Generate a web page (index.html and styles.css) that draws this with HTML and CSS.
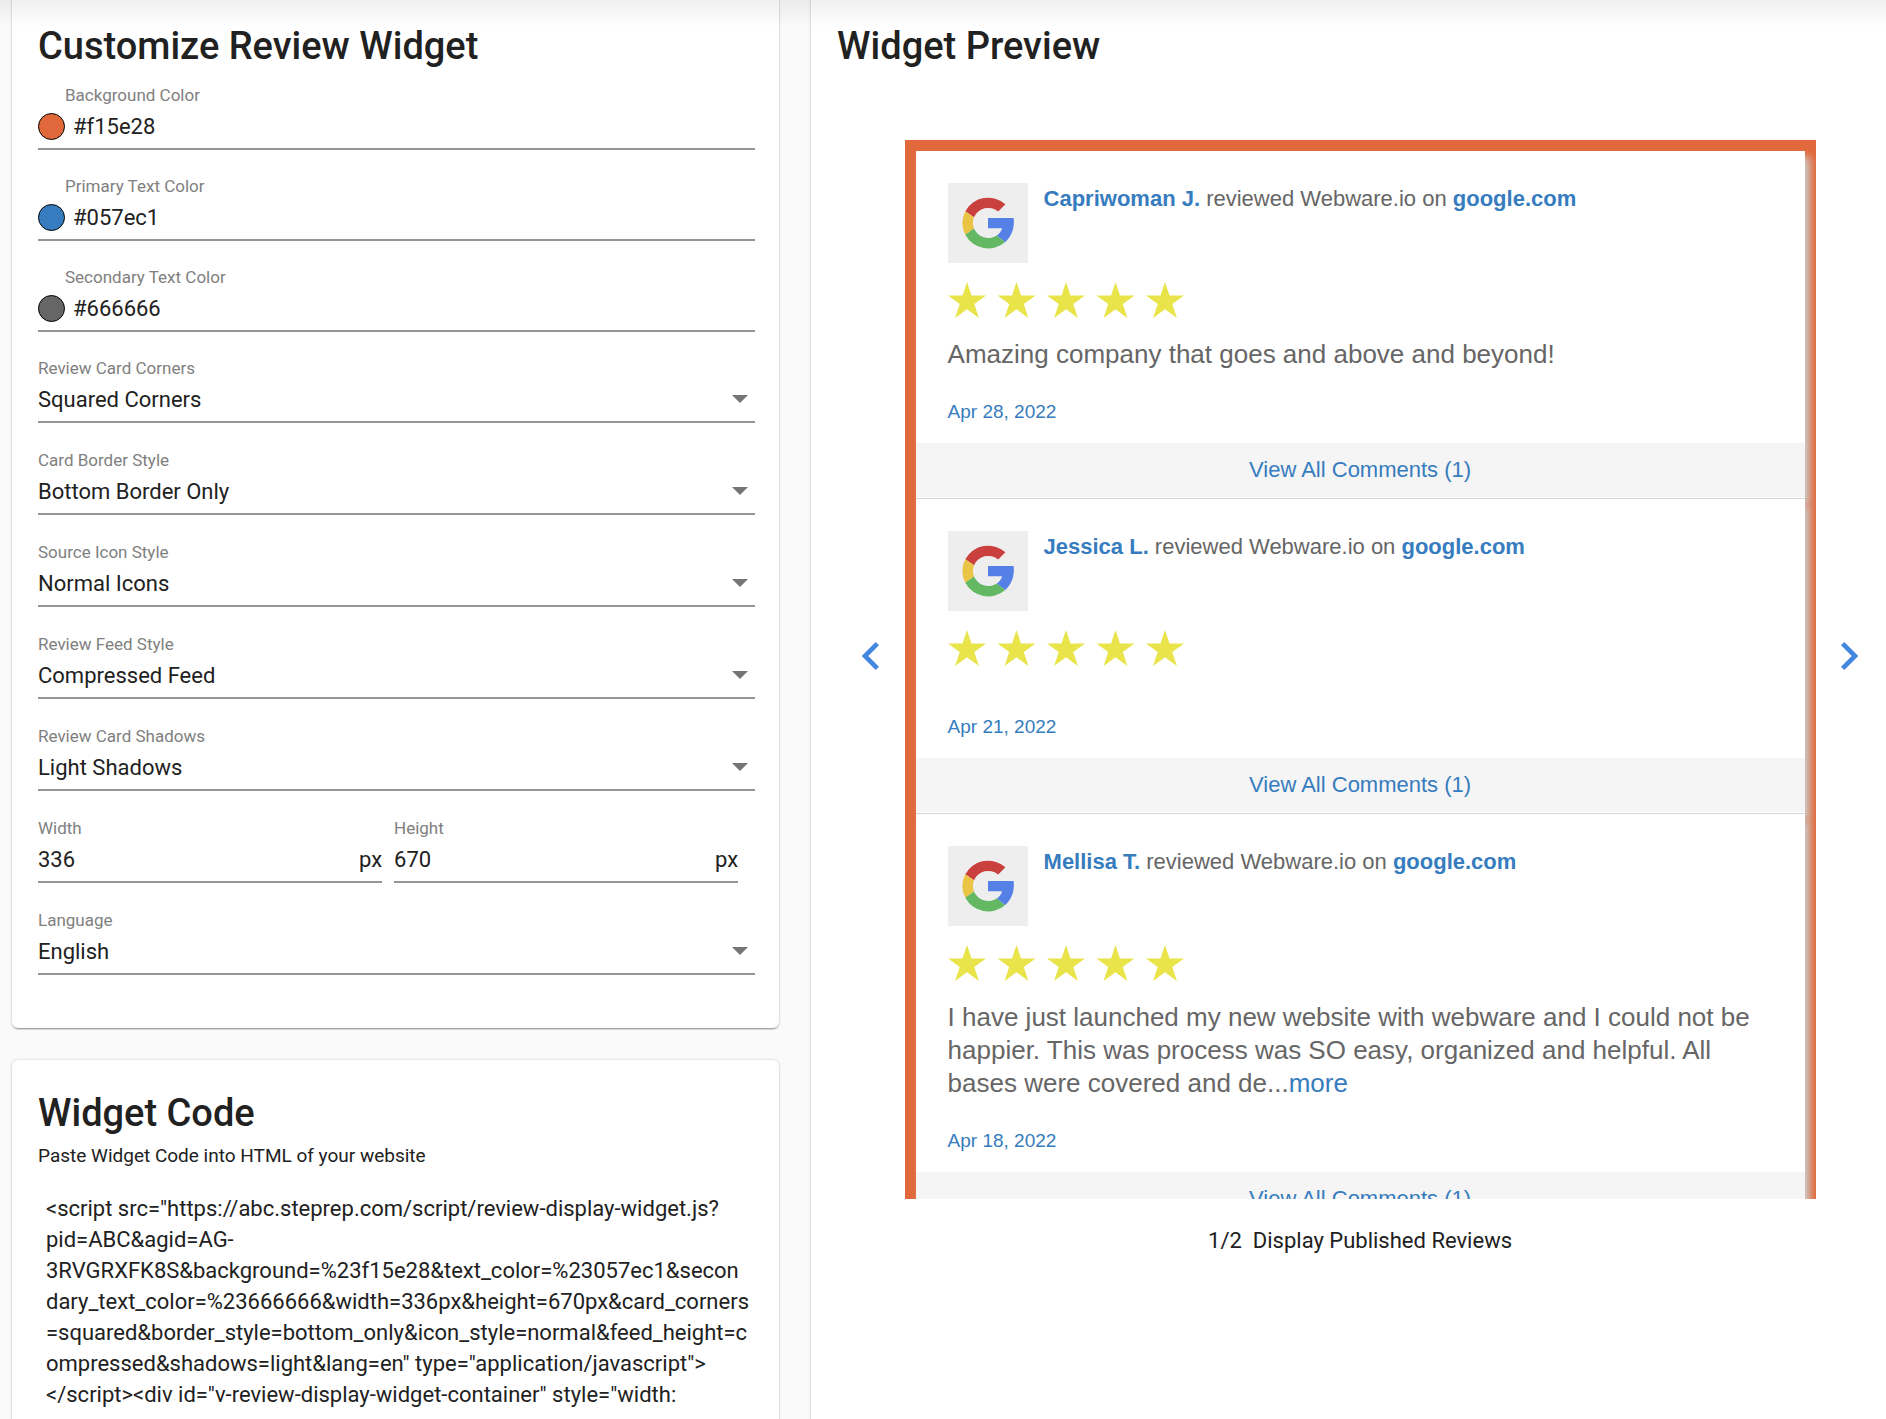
FILE: index.html
```
<!DOCTYPE html>
<html lang="en">

<head>
    <meta charset="UTF-8">
    <meta name="viewport" content="width=device-width, initial-scale=1.0">
    <title>Review Display Widget</title>
    <link rel="stylesheet" href="styles.css">
</head>

<body>
    <!-- shared shapes -->
    <svg class="defs" aria-hidden="true">
        <symbol id="stars" viewBox="0 0 236 36">
            <g fill="#e8e449">
                <path id="star" d="M19 0l4.5 13.5H38L26.300 22 30.900 36 19 27.300 7.100 36 11.700 22 0 13.500h14.500z"/>
                <use href="#star" x="49.500"/>
                <use href="#star" x="99"/>
                <use href="#star" x="148.500"/>
                <use href="#star" x="198"/>
            </g>
        </symbol>
        <symbol id="google" viewBox="0 0 52 52">
            <path fill="#c9403c" d="M3.300 14.200A26 26 0 0 1 43.400 7.300L36.200 14.500A15.500 15.500 0 0 0 12 20.300z"/>
            <path fill="#eac445" d="M3.300 14.200A26 26 0 0 0 3.300 37.800L12 31.500A15.500 15.500 0 0 1 12 20.300z"/>
            <path fill="#65b863" d="M3.300 37.800A26 26 0 0 0 43.300 45L34.800 38.500A15.500 15.500 0 0 1 12 31.500z"/>
            <path fill="#5580e6" d="M26 21H51.600C52.800 30.500 49.800 39 43.300 45L34.800 38.500C37.600 36.600 39.300 34.300 40 31.200H26z"/>
        </symbol>
    </svg>

    <main class="page">
        <div class="column">
            <section class="card">
                <h1>Customize Review Widget</h1>
                <form>
                    <div class="field color-field">
                        <label for="background">Background Color</label>
                        <div class="control">
                            <span class="swatch swatch-background"></span>
                            <input type="text" id="background" value="#f15e28">
                        </div>
                    </div>
                    <div class="field color-field">
                        <label for="primaryText">Primary Text Color</label>
                        <div class="control">
                            <span class="swatch swatch-primary"></span>
                            <input type="text" id="primaryText" value="#057ec1">
                        </div>
                    </div>
                    <div class="field color-field">
                        <label for="secondaryText">Secondary Text Color</label>
                        <div class="control">
                            <span class="swatch swatch-secondary"></span>
                            <input type="text" id="secondaryText" value="#666666">
                        </div>
                    </div>
                    <div class="field select-field">
                        <label for="corners">Review Card Corners</label>
                        <div class="control">
                            <select id="corners"><option>Squared Corners</option></select>
                        </div>
                    </div>
                    <div class="field select-field">
                        <label for="borderStyle">Card Border Style</label>
                        <div class="control">
                            <select id="borderStyle"><option>Bottom Border Only</option></select>
                        </div>
                    </div>
                    <div class="field select-field">
                        <label for="iconStyle">Source Icon Style</label>
                        <div class="control">
                            <select id="iconStyle"><option>Normal Icons</option></select>
                        </div>
                    </div>
                    <div class="field select-field">
                        <label for="feedStyle">Review Feed Style</label>
                        <div class="control">
                            <select id="feedStyle"><option>Compressed Feed</option></select>
                        </div>
                    </div>
                    <div class="field select-field">
                        <label for="shadows">Review Card Shadows</label>
                        <div class="control">
                            <select id="shadows"><option>Light Shadows</option></select>
                        </div>
                    </div>
                    <div class="size-row">
                        <div class="field">
                            <label for="width">Width</label>
                            <div class="control">
                                <input type="text" id="width" value="336">
                                <span>px</span>
                            </div>
                        </div>
                        <div class="field">
                            <label for="height">Height</label>
                            <div class="control">
                                <input type="text" id="height" value="670">
                                <span>px</span>
                            </div>
                        </div>
                    </div>
                    <div class="field select-field">
                        <label for="language">Language</label>
                        <div class="control">
                            <select id="language"><option>English</option></select>
                        </div>
                    </div>
                </form>
            </section>

            <section class="card">
                <h1>Widget Code</h1>
                <label class="hint" for="code">Paste Widget Code into HTML of your website</label>
                <textarea readonly id="code" class="code" rows="7" spellcheck="false">&lt;script src="https://abc.steprep.com/script/review-display-widget.js?
pid=ABC&amp;agid=AG-
3RVGRXFK8S&amp;background=%23f15e28&amp;text_color=%23057ec1&amp;secon
dary_text_color=%23666666&amp;width=336px&amp;height=670px&amp;card_corners
=squared&amp;border_style=bottom_only&amp;icon_style=normal&amp;feed_height=c
ompressed&amp;shadows=light&amp;lang=en" type="application/javascript"&gt;
&lt;/script&gt;&lt;div id="v-review-display-widget-container" style="width:</textarea>
            </section>
        </div>

        <section class="card">
            <h1>Widget Preview</h1>
            <div class="carousel">
                <button type="button" class="arrow" aria-label="Previous">
                    <svg viewBox="0 0 24 24"><path d="M15.410 7.410L14 6l-6 6 6 6 1.410-1.410L10.830 12z"/></svg>
                </button>
                <div class="widget">
                    <article class="review">
                        <div class="review-body">
                            <div class="review-head">
                                <span class="source"><svg><use href="#google"/></svg></span>
                                <p><b>Capriwoman J.</b> reviewed Webware.io on <a href="#"><b>google.com</b></a></p>
                            </div>
                            <svg class="stars" role="img" aria-label="5 stars"><use href="#stars"/></svg>
                            <p class="review-text">Amazing company that goes and above and beyond!</p>
                            <time datetime="2022-04-28">Apr 28, 2022</time>
                        </div>
                        <a href="#" class="comments">View All Comments (1)</a>
                    </article>
                    <article class="review">
                        <div class="review-body">
                            <div class="review-head">
                                <span class="source"><svg><use href="#google"/></svg></span>
                                <p><b>Jessica L.</b> reviewed Webware.io on <a href="#"><b>google.com</b></a></p>
                            </div>
                            <svg class="stars" role="img" aria-label="5 stars"><use href="#stars"/></svg>
                            <p class="review-text"></p>
                            <time datetime="2022-04-21">Apr 21, 2022</time>
                        </div>
                        <a href="#" class="comments">View All Comments (1)</a>
                    </article>
                    <article class="review">
                        <div class="review-body">
                            <div class="review-head">
                                <span class="source"><svg><use href="#google"/></svg></span>
                                <p><b>Mellisa T.</b> reviewed Webware.io on <a href="#"><b>google.com</b></a></p>
                            </div>
                            <svg class="stars" role="img" aria-label="5 stars"><use href="#stars"/></svg>
                            <p class="review-text">I have just launched my new website with webware and I could not be happier. This was process was SO easy, organized and helpful. All bases were covered and de...<a href="#">more</a></p>
                            <time datetime="2022-04-18">Apr 18, 2022</time>
                        </div>
                        <a href="#" class="comments">View All Comments (1)</a>
                    </article>
                </div>
                <button type="button" class="arrow" aria-label="Next">
                    <svg viewBox="0 0 24 24"><path d="M8.590 16.590L13.170 12 8.590 7.410 10 6l6 6-6 6z"/></svg>
                </button>
            </div>
            <p class="caption">1/2&nbsp; Display Published Reviews</p>
        </section>
    </main>
</body>

</html>
```

FILE: styles.css
```
:root {
    --text: #212121;
    --label: #808080;
    --line: #949494;
    --widget-background: #e1683a;
    --widget-primary: #367cbe;
    --widget-secondary: #666666;
}

* {
    box-sizing: border-box;
    margin: 0;
    padding: 0;
}

body {
    height: 100vh;
    overflow: hidden;
    background-color: #fafafa;
    color: var(--text);
    font-family: Roboto, sans-serif;
    font-size: 22px;
}

/* shadow of the toolbar above */
body::before {
    content: "";
    position: absolute;
    top: 0;
    left: 0;
    right: 0;
    height: 28px;
    background: linear-gradient(rgba(0, 0, 0, 0.06), rgba(0, 0, 0, 0));
    z-index: 1;
    pointer-events: none;
}

.defs {
    display: none;
}

a {
    color: inherit;
    text-decoration: none;
}

.page {
    display: grid;
    grid-template-columns: 7fr 10fr;
    gap: 32px;
    margin: -7px -21px 0 12px;
}

.card {
    padding: 33px 24px 26px 26px;
    background-color: white;
    border-radius: 6px;
    box-shadow: 0 2px 2px -1px rgba(0, 0, 0, 0.4), 0 0 3px rgba(0, 0, 0, 0.2);
}

.column .card + .card {
    margin-top: 32px;
}

h1 {
    font-size: 38px;
    font-weight: 500;
    line-height: 40px;
}

form {
    padding: 18px 0 27px;
}

/* form fields */
.field {
    margin-bottom: 25px;
}

.select-field {
    margin-bottom: 26px;
}

.field:last-child {
    margin-bottom: 0;
}

.field label {
    display: block;
    font-size: 17px;
    line-height: 22px;
    color: var(--label);
}

.control {
    display: flex;
    align-items: center;
    height: 44px;
    padding-bottom: 2px;
    border-bottom: 2px solid var(--line);
}

.control input,
.control select {
    flex: 1;
    min-width: 0;
    border: none;
    outline: none;
    background: none;
    color: inherit;
    font: inherit;
}

.control select {
    appearance: none;
}

.select-field .control::after {
    content: "";
    margin-right: 7px;
    border: 8px solid transparent;
    border-top-color: #757575;
    border-bottom: none;
}

.color-field label {
    padding-left: 27px;
}

.color-field .control {
    gap: 8px;
}

.swatch {
    width: 27px;
    height: 27px;
    border: 1px solid black;
    border-radius: 50%;
}

.swatch-background {
    background-color: var(--widget-background);
}

.swatch-primary {
    background-color: var(--widget-primary);
}

.swatch-secondary {
    background-color: var(--widget-secondary);
}

.size-row {
    display: grid;
    grid-template-columns: 1fr 1fr;
    gap: 12px;
    margin-right: 17px;
    margin-bottom: 26px;
}

.size-row .field {
    margin-bottom: 0;
}

/* widget code */
.hint {
    display: block;
    margin-top: 10px;
    font-size: 19px;
    line-height: 26px;
}

.code {
    display: block;
    width: calc(100% + 16px);
    margin-top: 24px;
    padding: 0 8px;
    border: none;
    outline: none;
    resize: none;
    overflow: hidden;
    background: none;
    color: inherit;
    font: inherit;
    line-height: 31px;
}

/* preview */
.carousel {
    display: flex;
    margin-top: 74px;
}

.arrow {
    flex: 1;
    display: flex;
    align-items: center;
    justify-content: center;
    padding-bottom: 27px;
    border: none;
    background: none;
    cursor: pointer;
}

.arrow svg {
    flex: none;
    width: 56px;
    height: 56px;
    fill: #4387df;
}

.widget {
    width: 911px;
    height: 1059px;
    padding: 11px;
    overflow: hidden;
    background-color: var(--widget-background);
    color: var(--widget-secondary);
    font-family: "Liberation Sans", Arial, sans-serif;
}

.review {
    background-color: white;
    border-bottom: 1px solid #d6d6d6;
    box-shadow: 5px 6px 8px #ccc;
}

.review-body {
    padding: 32px 32px 20px;
}

.review-head {
    display: flex;
    gap: 16px;
    line-height: 32px;
}

.review b,
.review a,
.review time {
    color: var(--widget-primary);
}

.source {
    display: flex;
    align-items: center;
    justify-content: center;
    width: 80px;
    height: 80px;
    background-color: #eee;
}

.source svg {
    width: 52px;
    height: 52px;
}

.stars {
    display: block;
    width: 236px;
    height: 36px;
    margin-top: 19px;
}

.review-text {
    padding: 20px 0 30px;
    font-size: 26px;
    line-height: 33px;
}

.review time {
    display: block;
    font-size: 19px;
    line-height: 22px;
}

.comments {
    display: block;
    border-bottom: 1px solid white;
    background-color: #f5f5f5;
    line-height: 54px;
    text-align: center;
}

.caption {
    margin-top: 27px;
    line-height: 30px;
    text-align: center;
}
```
